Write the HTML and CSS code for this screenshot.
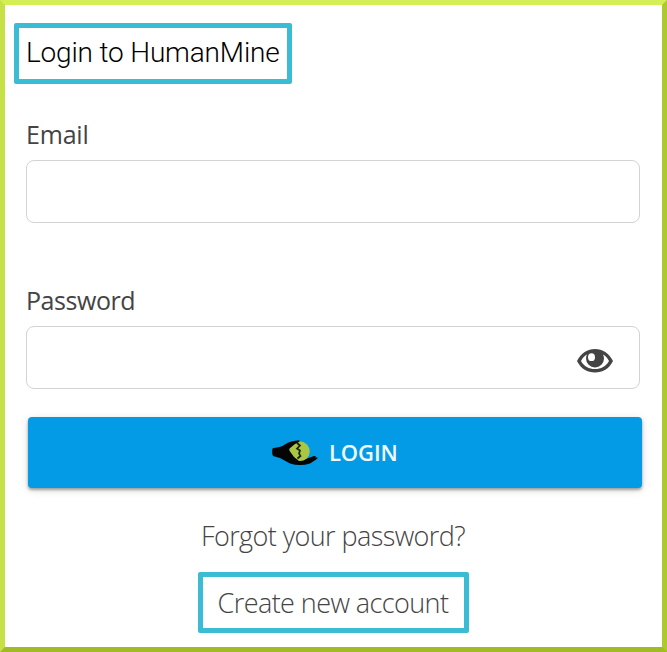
FILE: index.html
```html
<!DOCTYPE html>
<html lang="en">
<head>
<meta charset="utf-8">
<title>Login to HumanMine</title>
<link rel="stylesheet" href="styles.css">
</head>
<body>
<main class="panel">
  <h1 class="title outlined"><span>Login to HumanMine</span></h1>
  <form class="form">
    <label class="label" for="email">Email</label>
    <input class="field" id="email" type="email">
    <label class="label label-password" for="password">Password</label>
    <div class="field password-field">
      <input class="password-input" id="password" type="password">
      <svg class="eye" viewBox="0 0 36 24" aria-hidden="true">
        <path fill="#444" fill-rule="evenodd" d="M0 12C4 4 10.500 0 18 0S32 4 36 12C32 20 25.500 23.500 18 23.500S4 20 0 12ZM4 12C7 17.500 12 20 18 20S29 17.500 32 12C30.500 9 28.800 7 26 5.500A9.200 9.200 0 0 1 27 9.500A9 9 0 0 1 9 9.500A9.200 9.200 0 0 1 10 5.500C7.200 7 5.500 9 4 12Z"/>
        <ellipse cx="14.500" cy="8.200" rx="3.500" ry="3.900" fill="#fff"/>
      </svg>
    </div>
    <button class="login" type="button">
      <svg class="logo" viewBox="0 0 46 26" aria-hidden="true">
        <circle cx="27.500" cy="11.500" r="10.200" fill="#a9c744"/>
        <path fill="#050505" d="M.500 8.500C4 7 8 8 12 5C17 1.500 22 1 27 .300C29 1.200 26 3 23 4L17.500 8.500Q16.500 9.500 18 11.500L22 17L27 21Q31 21.500 35 18.500L42 16Q45 15.500 43 17.500L45.500 17.500Q46 18.500 43.500 20L38 23.500Q28 26.500 18 23.500L8 18L1 16Q-.500 12 .500 8.500Z"/>
        <path d="m25 3 3 2.500-3 3 3 2-1 3 1.500 2.500-3 2.500" fill="none" stroke="#182008" stroke-width="1.700"/>
      </svg>
      <span class="login-text">LOGIN</span>
    </button>
  </form>
  <a class="link forgot"><span>Forgot your password?</span></a>
  <a class="link create outlined"><span>Create new account</span></a>
</main>
</body>
</html>
```
FILE: styles.css
```css
* { box-sizing: border-box; }
body { margin: 0; background: #fff; }
.panel {
  display: flex;
  flex-direction: column;
  height: 652px;
  padding: 18px 20px 0 9px;
  border: 5px solid;
  border-color: #d4ee55 #adc92d #a2ba24 #c6e146;
}
.outlined { border: 5px solid #3bbcd5; border-radius: 2px; }
.title {
  width: 278px;
  height: 61px;
  margin: 0;
  padding-left: 7px;
  color: #000;
  font: 300 28px/49px Roboto, sans-serif;
  letter-spacing: -0.17px;
  white-space: nowrap;
}
.form {
  display: flex;
  flex-direction: column;
  margin: 34px 3px 0 12px;
}
.form, .link { font-family: "Open Sans", "Noto Sans", sans-serif; }
.label {
  height: 42px;
  color: #444;
  font-size: 25px;
  line-height: 32px;
  letter-spacing: -0.45px;
}
.label[for="email"] { letter-spacing: -0.2px; }
.label-password { margin-top: 61px; }
.field {
  width: 614px;
  height: 63px;
  border: 1px solid #d3d3d3;
  border-radius: 8px;
  background: #fff;
}
.password-field { display: flex; align-items: center; padding-right: 26px; }
.password-input { flex: 1; min-width: 0; height: 100%; border: 0; background: transparent; }
.eye { width: 36px; height: 24px; margin-top: 6px; }
.login {
  display: flex;
  align-items: center;
  width: 614px;
  height: 71px;
  margin: 28px 0 0 2px;
  padding: 0 0 0 244px;
  border: 0;
  border-radius: 4px;
  background: #039be5;
  box-shadow: 0 2px 3px #0005, 0 2px 8px #0002;
  color: #f2faff;
}
.logo { width: 46px; height: 26px; flex: none; }
.login-text { margin: -2px 0 0 11px; font: 600 22px/30px "Open Sans", sans-serif; letter-spacing: -0.1px; }
.link {
  align-self: center;
  color: #444;
  font-size: 27px;
  font-weight: 300;
  letter-spacing: -0.58px;
  white-space: nowrap;
}
.forgot { margin: 29px 0 0 10px; height: 40px; line-height: 38px; }
.create { width: 271px; height: 61px; margin: 15px 0 0 10px; line-height: 52px; text-align: center; }
```
